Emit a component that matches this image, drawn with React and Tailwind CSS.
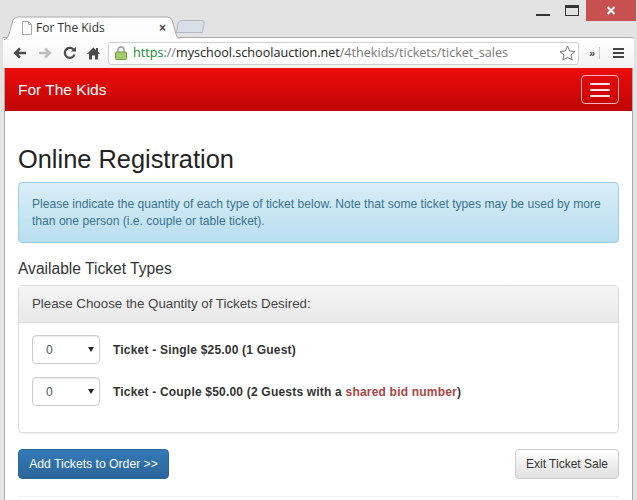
import React from 'react';

const font = { fontFamily: '"Liberation Sans", Arial, sans-serif' };

const Tab = () => (
  <div className="relative w-[181px] h-[24px] shrink-0 -mb-[3px]">
    <svg className="absolute inset-0" width="181" height="24" viewBox="0 0 181 24">
      <path d="M1 24 C4 24 5 21 6 18 L10 4 C11 2 13 1 16 1 L163 1 C166 1 168 2 169 4 L173 18 C174 21 175 23 178 24 Z" fill="url(#tabFill)" />
      <path d="M1 23.5 C4 23 5 21 6 18 L10 4 C11 2 13 1 16 1 L163 1 C166 1 168 2 169 4 L173 18 C174 21 175 23 178 21" fill="none" stroke="#a9a9a9" />
      <defs>
        <linearGradient id="tabFill" x1="0" y1="0" x2="0" y2="1">
          <stop offset="0" stopColor="#ffffff" />
          <stop offset="1" stopColor="#fbfbfb" />
        </linearGradient>
      </defs>
    </svg>
    <div className="absolute inset-0 flex items-center pl-[18px] pr-[18px]">
      <svg width="12" height="14" viewBox="0 0 12 14" className="shrink-0">
        <path d="M1.5 .5 H7.5 L10.5 3.5 V13.5 H1.5 Z M7.5 .5 V3.5 H10.5" fill="#fff" stroke="#a8a8a8" />
      </svg>
      <span className="ml-[3px] text-[12px] text-[#333]" style={{ fontFamily: '"Open Sans", sans-serif' }}>For The Kids</span>
      <span className="ml-auto text-[12px] font-bold leading-none text-[#444]">×</span>
    </div>
  </div>
);

const Toolbar = () => (
  <div className="h-[31px] mx-[3px] bg-gradient-to-b from-white to-[#f1f1f1] border-t border-[#a9a9a9] rounded-tr-[3px] flex items-center pl-[10px] pr-[10px]">
    <svg width="14" height="12" viewBox="0 0 14 12" className="shrink-0">
      <path d="M13 6 H3 M7 1.5 L2.2 6 L7 10.5" fill="none" stroke="#4a4a4a" strokeWidth="2.4" />
    </svg>
    <svg width="14" height="12" viewBox="0 0 14 12" className="ml-[11px] shrink-0">
      <path d="M1 6 H11 M7 1.5 L11.8 6 L7 10.5" fill="none" stroke="#bdbdbd" strokeWidth="2.4" />
    </svg>
    <svg width="14" height="14" viewBox="0 0 14 14" className="ml-[11px] shrink-0">
      <path d="M11.5 8.5 A5 5 0 1 1 10.5 3.5" fill="none" stroke="#4a4a4a" strokeWidth="2.2" />
      <path d="M8 5.5 H13 V.7 Z" fill="#4a4a4a" />
    </svg>
    <svg width="13" height="13" viewBox="0 0 13 13" className="ml-[10px] shrink-0">
      <path d="M6.5 .5 L9 2.9 V1 H11 V4.8 L13 6.8 H11 V12.5 H8 V8.5 H5 V12.5 H2 V6.8 H0 Z" fill="#4a4a4a" />
    </svg>
    <div className="ml-[8px] h-[23px] w-[471px] shrink-0 bg-white border border-[#cfcfcf] rounded-[3px] flex items-center pl-[6px] pr-[2px]">
      <svg width="12" height="14" viewBox="0 0 12 14" className="shrink-0">
        <path d="M3 6.5 V4 A3 3 0 0 1 9 4 V6.5" fill="none" stroke="#999" strokeWidth="1.4" />
        <rect x=".5" y="6" width="11" height="7.5" rx="1" fill="#a3cc6e" stroke="#6f9b3d" />
      </svg>
      <span className="ml-[6px] text-[12.6px] whitespace-nowrap" style={{ fontFamily: '"Open Sans", sans-serif' }}>
        <span className="text-[#168a2c]">https</span>
        <span className="text-[#777]">://</span>
        <span className="text-[#222]">myschool.schoolauction.net</span>
        <span className="text-[#777]">/4thekids/tickets/ticket_sales</span>
      </span>
      <svg width="17" height="16" viewBox="0 0 17 16" className="ml-auto shrink-0">
        <path d="M8.5 1 L10.7 6 L16 6.5 L12 10 L13.2 15 L8.5 12.4 L3.8 15 L5 10 L1 6.5 L6.3 6 Z" fill="#fff" stroke="#777" />
      </svg>
    </div>
    <span className="ml-[10px] text-[11px] font-bold text-[#444] leading-none">»</span>
    <div className="ml-[4px] w-px h-[12px] bg-[#ccc]" />
    <div className="ml-auto flex flex-col gap-[2px]">
      <div className="w-[11px] h-[2px] bg-[#444]" />
      <div className="w-[11px] h-[2px] bg-[#444]" />
      <div className="w-[11px] h-[2px] bg-[#444]" />
    </div>
  </div>
);

const WindowControls = () => (
  <div className="absolute top-0 right-[1px] flex items-start">
    <div className="w-[14px] h-[2px] bg-[#333] mt-[14px] mr-[15px]" />
    <div className="w-[14px] h-[11px] border border-[#333] border-t-[3px] mt-[5px] mr-[7px]" />
    <div className="w-[50px] h-[21px] bg-[#c75050] flex items-center justify-center">
      <svg width="10" height="9" viewBox="0 0 10 9">
        <path d="M1.5 1 L8.5 8 M8.5 1 L1.5 8" stroke="#fff" strokeWidth="2" />
      </svg>
    </div>
  </div>
);

const TicketSelect = () => (
  <div className="w-[68px] h-[29px] shrink-0 bg-white border border-[#ccc] rounded-[4px] shadow-[inset_0_1px_1px_rgba(0,0,0,0.075)] flex items-center justify-between pl-[13px] pr-[5px]">
    <span className="text-[12px] text-[#555]">0</span>
    <svg width="6" height="5" viewBox="0 0 6 5"><path d="M0 0 H6 L3 5 Z" fill="#222" /></svg>
  </div>
);

export default function App() {
  return (
    <div className="relative w-[637px] h-[500px] overflow-hidden bg-[#e3e3e3] flex flex-col" style={font}>
      <WindowControls />
      <div className="h-[37px] shrink-0 flex items-end pl-[3px] relative z-10">
        <Tab />
        <div className="w-[27px] h-[13px] -ml-[7px] mb-[4px] bg-[#d9dfe8] border border-[#b5b9bf] rounded-t-[4px] -skew-x-12" />
      </div>
      <Toolbar />
      <div className="flex-1 min-h-0 ml-[4px] mr-[4px] bg-white border-x border-[#a9a9a9] overflow-hidden">
        <div className="h-[43px] bg-gradient-to-b from-[#ee0c0c] to-[#c00505] flex items-center justify-between pl-[13px] pr-[13px]">
          <span className="text-[15.5px] text-white">For The Kids</span>
          <button className="w-[38px] h-[29px] border border-[#f3b4b4] rounded-[4px] flex flex-col items-center justify-center gap-[4px]">
            <span className="w-[20px] h-[2px] bg-[#f4e4e4] rounded-[1px]" />
            <span className="w-[20px] h-[2px] bg-[#f4e4e4] rounded-[1px]" />
            <span className="w-[20px] h-[2px] bg-[#f4e4e4] rounded-[1px]" />
          </button>
        </div>
        <div className="px-[13px]">
          <h2 className="mt-[34px] text-[25.4px] leading-[29px] text-[#222]">Online Registration</h2>
          <div className="mt-[8px] h-[61px] bg-gradient-to-b from-[#d9edf7] to-[#b9def0] border border-[#9acfea] rounded-[4px] px-[13px] pt-[13px] text-[12.1px] leading-[17px] text-[#3a7391]">
            Please indicate the quantity of each type of ticket below. Note that some ticket types may be used by more than one person (i.e. couple or table ticket).
          </div>
          <h4 className="mt-[17px] text-[15.6px] leading-[18px] text-[#333]">Available Ticket Types</h4>
          <div className="mt-[7px] h-[148px] border border-[#ddd] rounded-[4px] shadow-[0_1px_1px_rgba(0,0,0,0.05)]">
            <div className="h-[37px] bg-gradient-to-b from-[#f5f5f5] to-[#e8e8e8] border-b border-[#ddd] rounded-t-[3px] flex items-center px-[13px] text-[13.3px] text-[#444]">
              Please Choose the Quantity of Tickets Desired:
            </div>
            <div className="pt-[12px] pl-[13px] flex flex-col gap-[13px]">
              <div className="flex items-center gap-[13px]">
                <TicketSelect />
                <span className="text-[12px] font-bold text-[#333] tracking-[.2px]">Ticket - Single $25.00 (1 Guest)</span>
              </div>
              <div className="flex items-center gap-[13px]">
                <TicketSelect />
                <span className="text-[12px] font-bold text-[#333] tracking-[.2px]">
                  Ticket - Couple $50.00 (2 Guests with a <span className="text-[#a94442]">shared bid number</span>)
                </span>
              </div>
            </div>
          </div>
          <div className="mt-[16px] flex items-center justify-between">
            <button className="w-[151px] h-[30px] bg-gradient-to-b from-[#337ab7] to-[#2b669a] border border-[#2b669a] rounded-[4px] text-[12.2px] text-white">
              Add Tickets to Order &gt;&gt;
            </button>
            <button className="w-[104px] h-[30px] bg-gradient-to-b from-white to-[#e0e0e0] border border-[#ccc] rounded-[4px] text-[12px] text-[#333]">
              Exit Ticket Sale
            </button>
          </div>
          <div className="mt-[17px] border-t border-[#eee]" />
        </div>
      </div>
    </div>
  );
}
